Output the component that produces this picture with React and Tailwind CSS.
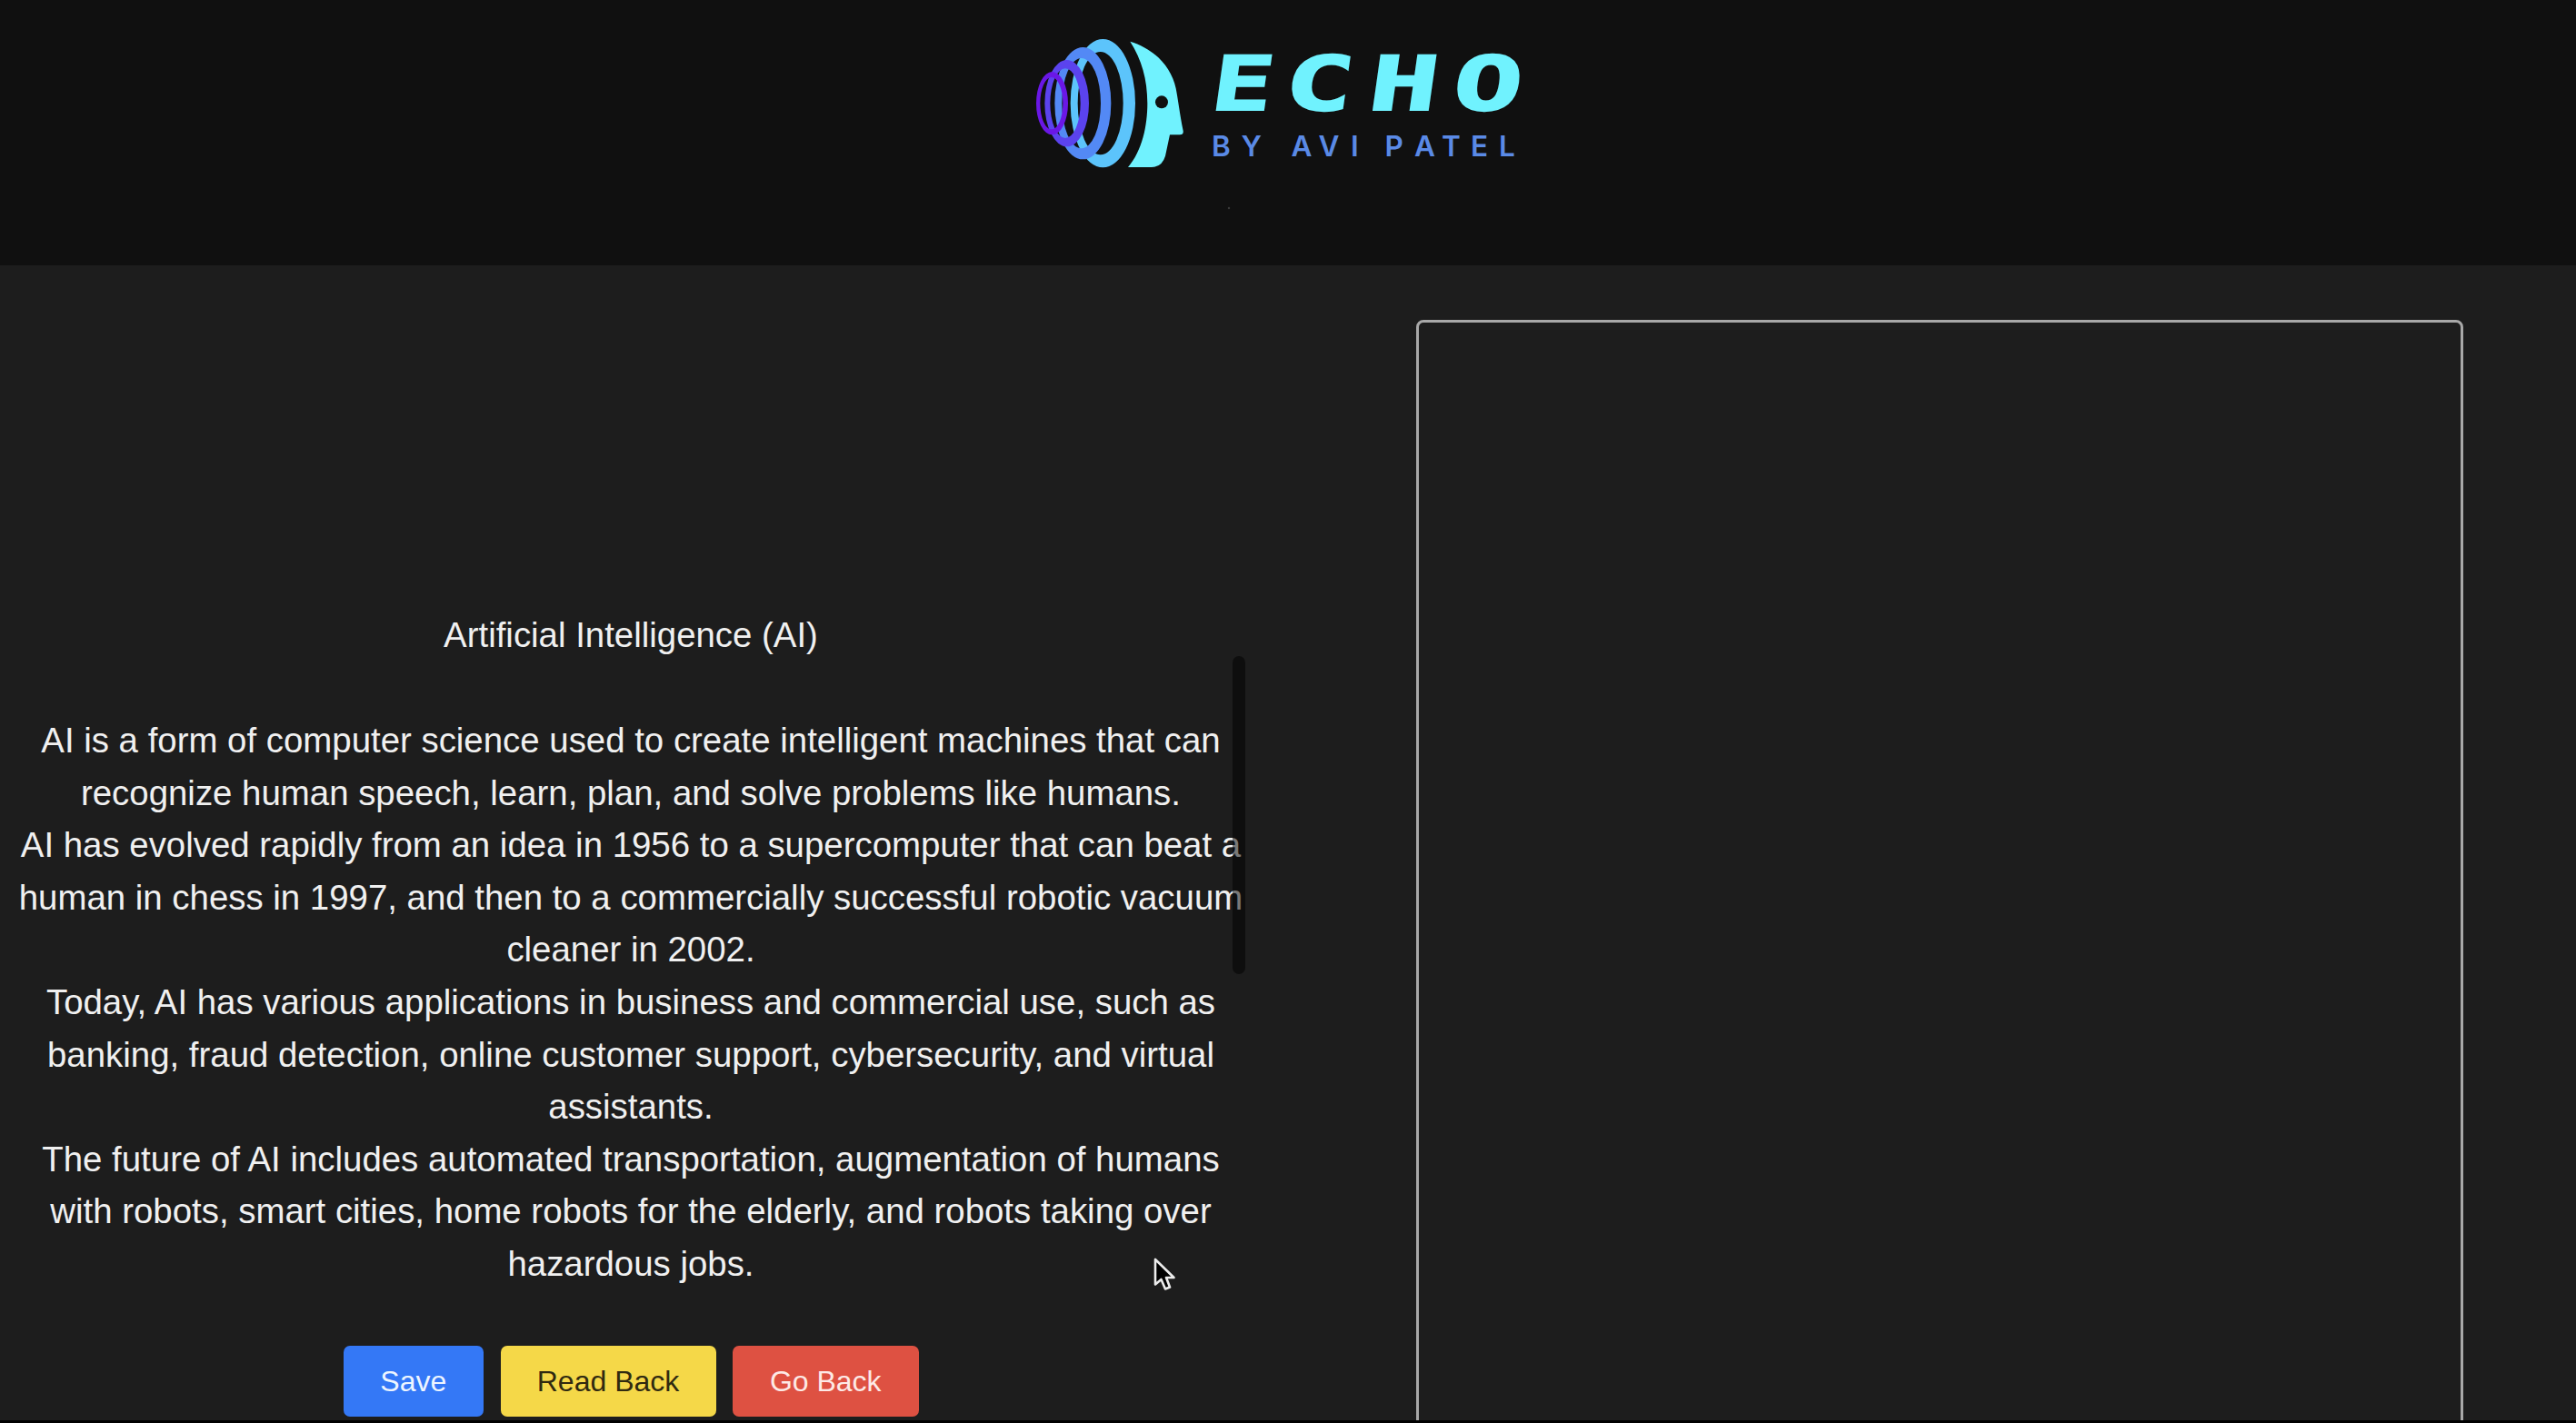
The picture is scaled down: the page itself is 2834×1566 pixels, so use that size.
const lines = [
  'AI is a form of computer science used to create intelligent machines that can',
  'recognize human speech, learn, plan, and solve problems like humans.',
  'AI has evolved rapidly from an idea in 1956 to a supercomputer that can beat a',
  'human in chess in 1997, and then to a commercially successful robotic vacuum',
  'cleaner in 2002.',
  'Today, AI has various applications in business and commercial use, such as',
  'banking, fraud detection, online customer support, cybersecurity, and virtual',
  'assistants.',
  'The future of AI includes automated transportation, augmentation of humans',
  'with robots, smart cities, home robots for the elderly, and robots taking over',
  'hazardous jobs.',
];

function Logo() {
  return (
    <svg viewBox="0 0 600 260" className="block h-[260px] w-[600px]" role="img" aria-label="Echo by Avi Patel">
      <g transform="translate(20 20) scale(0.33333)" fillRule="evenodd">
        <path fill="#5cc4fb" d="M173 281a107 212 0 1 0 214 0a107 212 0 1 0 -214 0zM197 281a75 170 0 1 0 150 0a75 170 0 1 0 -150 0z" />
        <path fill="#5389f5" d="M121 281a93 185 0 1 0 186 0a93 185 0 1 0 -186 0zM145 281a64 149 0 1 0 128 0a64 149 0 1 0 -128 0z" />
        <path fill="#5b43ee" d="M88 281a73 143 0 1 0 146 0a73 143 0 1 0 -146 0zM106 281a50 115 0 1 0 100 0a50 115 0 1 0 -100 0z" />
        <path fill="#6a17e6" d="M60 281a52.500 104 0 1 0 105 0a52.500 104 0 1 0 -105 0zM73 281a37.500 86 0 1 0 75 0a37.500 86 0 1 0 -75 0z" />
        <path fill="#70f2fe" d="M370 77C448 100 506 160 521 232C528 268 534 318 545 372Q547 385 534 385L501 385L486 455Q475 492 440 492L363 492C410 437 427 355 427 281C427 200 408 137 370 77z" />
        <circle cx="474" cy="277" r="21" fill="#101010" />
      </g>
      <text
        transform="translate(236 120.500) skewX(-8) scale(1.52 1)"
        y="0"
        stroke="#70f2fe"
        strokeWidth="2"
        strokeLinejoin="miter"
        className="fill-[#70f2fe] font-['DejaVu_Sans_Mono'] text-[82.500px] font-bold"
      >
        <tspan x="-4" textLength="44" lengthAdjust="spacingAndGlyphs">E</tspan>
        <tspan x="48.500 110 170.700">CHO</tspan>
      </text>
      <text
        x="233 265.500 0 320.500 350.500 386 0 423.500 456 486 518 549"
        y="172"
        className="fill-[#5a8ae6] font-['Inter'] text-[31.500px] font-semibold"
      >
        BY AVI PATEL
      </text>
      <circle cx="252" cy="229" r="1.200" fill="#3a3a3a" />
    </svg>
  );
}

export default function App() {
  return (
    <div className="flex h-[1566px] w-[2834px] flex-col overflow-hidden bg-black font-['Liberation_Sans',Arial,sans-serif]">
      <header className="h-[292px] shrink-0 bg-[#101010] pl-[1100px]">
        <Logo />
      </header>
      <main className="flex h-[1271px] shrink-0 overflow-hidden bg-[#1d1d1d]">
        <section className="relative flex w-[1388px] shrink-0 flex-col items-center pt-[377.500px] text-[38.400px] leading-[57.600px] text-[#f0f0f0]">
          <h1 className="whitespace-nowrap">Artificial Intelligence (AI)</h1>
          <div className="mt-[59px] text-center">
            {lines.map((line) => (
              <p key={line} className="whitespace-nowrap">{line}</p>
            ))}
          </div>
          <div className="mt-[61.500px] flex h-[78px] gap-[18.500px] text-[32px] leading-none">
            <button className="w-[154.500px] rounded-[7px] bg-[#3478f6] text-[#edf5ff]">Save</button>
            <button className="w-[237px] rounded-[7px] bg-[#f5d848] text-[#302a10]">Read Back</button>
            <button className="w-[204.500px] rounded-[7px] bg-[#de5142] text-[#fde9e6]">Go Back</button>
          </div>
          <div className="absolute left-[1356px] top-[430px] h-[350px] w-[14px] rounded-full bg-black/50" />
          <svg viewBox="0 0 26 40" className="absolute left-[1268px] top-[1090px] h-[40px] w-[26px]">
            <path
              d="M3 4V31.500L9.500 26L14 36.500L19 34.500L15 24H23.500Z"
              fill="#000"
              stroke="#ececec"
              strokeWidth="2.600"
              strokeLinejoin="round"
            />
          </svg>
        </section>
        <section className="ml-[170px] mt-[60px] h-[1300px] w-[1152px] shrink-0 rounded-[8px] border-[3px] border-[#a8a8a8]" />
      </main>
    </div>
  );
}
